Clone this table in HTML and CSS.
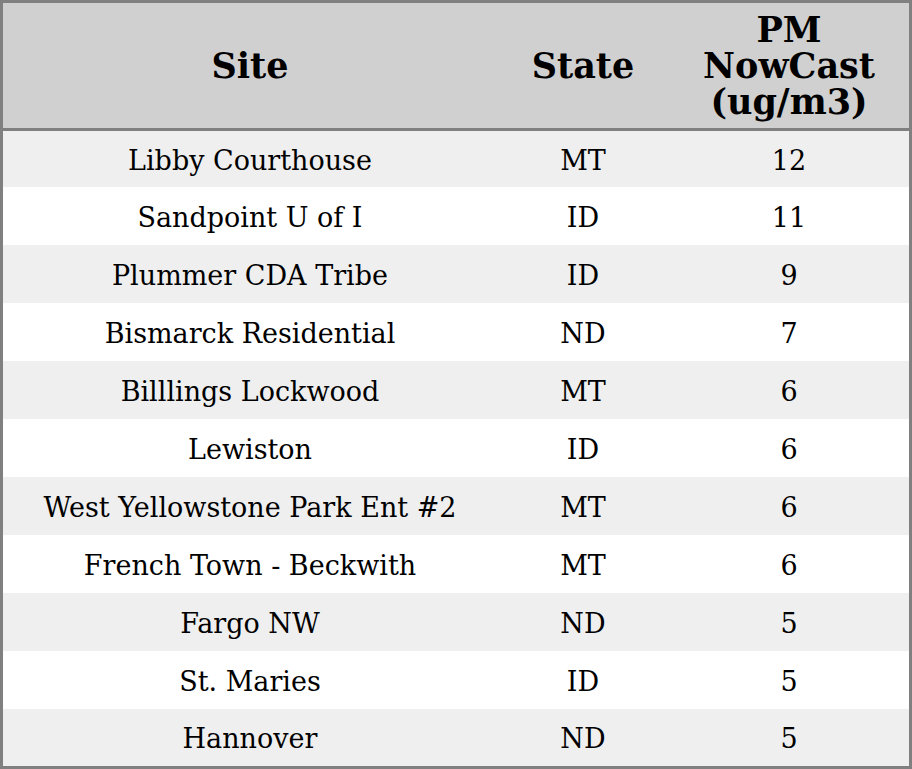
FILE: index.html
```html
<!DOCTYPE html>
<html>
<head>
<meta charset="utf-8">
<link rel="stylesheet" href="styles.css">
</head>
<body>
<table class="aq">
<colgroup><col class="c1"><col class="c2"><col class="c3"></colgroup>
<thead>
<tr><th>Site</th><th>State</th><th>PM<br>NowCast<br>(ug/m3)</th></tr>
</thead>
<tbody>
<tr><td>Libby Courthouse</td><td>MT</td><td>12</td></tr>
<tr><td>Sandpoint U of I</td><td>ID</td><td>11</td></tr>
<tr><td>Plummer CDA Tribe</td><td>ID</td><td>9</td></tr>
<tr><td>Bismarck Residential</td><td>ND</td><td>7</td></tr>
<tr><td>Billlings Lockwood</td><td>MT</td><td>6</td></tr>
<tr><td>Lewiston</td><td>ID</td><td>6</td></tr>
<tr><td>West Yellowstone Park Ent #2</td><td>MT</td><td>6</td></tr>
<tr><td>French Town - Beckwith</td><td>MT</td><td>6</td></tr>
<tr><td>Fargo NW</td><td>ND</td><td>5</td></tr>
<tr><td>St. Maries</td><td>ID</td><td>5</td></tr>
<tr><td>Hannover</td><td>ND</td><td>5</td></tr>
</tbody>
</table>
</body>
</html>
```
FILE: styles.css
```css
html, body { margin: 0; padding: 0; background: #fff; }
.aq {
  width: 912px;
  height: 769px;
  border-collapse: separate;
  border-spacing: 0;
  border: 3px solid #808080;
  box-sizing: border-box;
  font-family: "DejaVu Serif", serif;
  color: #000;
  table-layout: fixed;
}
.c1 { width: 494px; }
.c2 { width: 172px; }
.c3 { width: 240px; }
.aq th {
  background: #d0d0d0;
  font-size: 35px;
  font-weight: bold;
  line-height: 36px;
  height: 125px;
  padding: 0;
  text-align: center;
  vertical-align: middle;
  border-bottom: 3px solid #808080;
}
.aq td {
  font-size: 27px;
  text-align: center;
  vertical-align: middle;
  padding: 2px 0 0;
  height: 56px;
  box-sizing: border-box;
}
.aq tbody tr:first-child td { height: 56px; }
.aq tbody tr td { height: 58px; }
.aq tbody tr:first-child td { height: 56px; }
.aq tbody tr:last-child td { height: 57px; }
.aq tbody tr:nth-child(odd) td { background: #efefef; }
```
